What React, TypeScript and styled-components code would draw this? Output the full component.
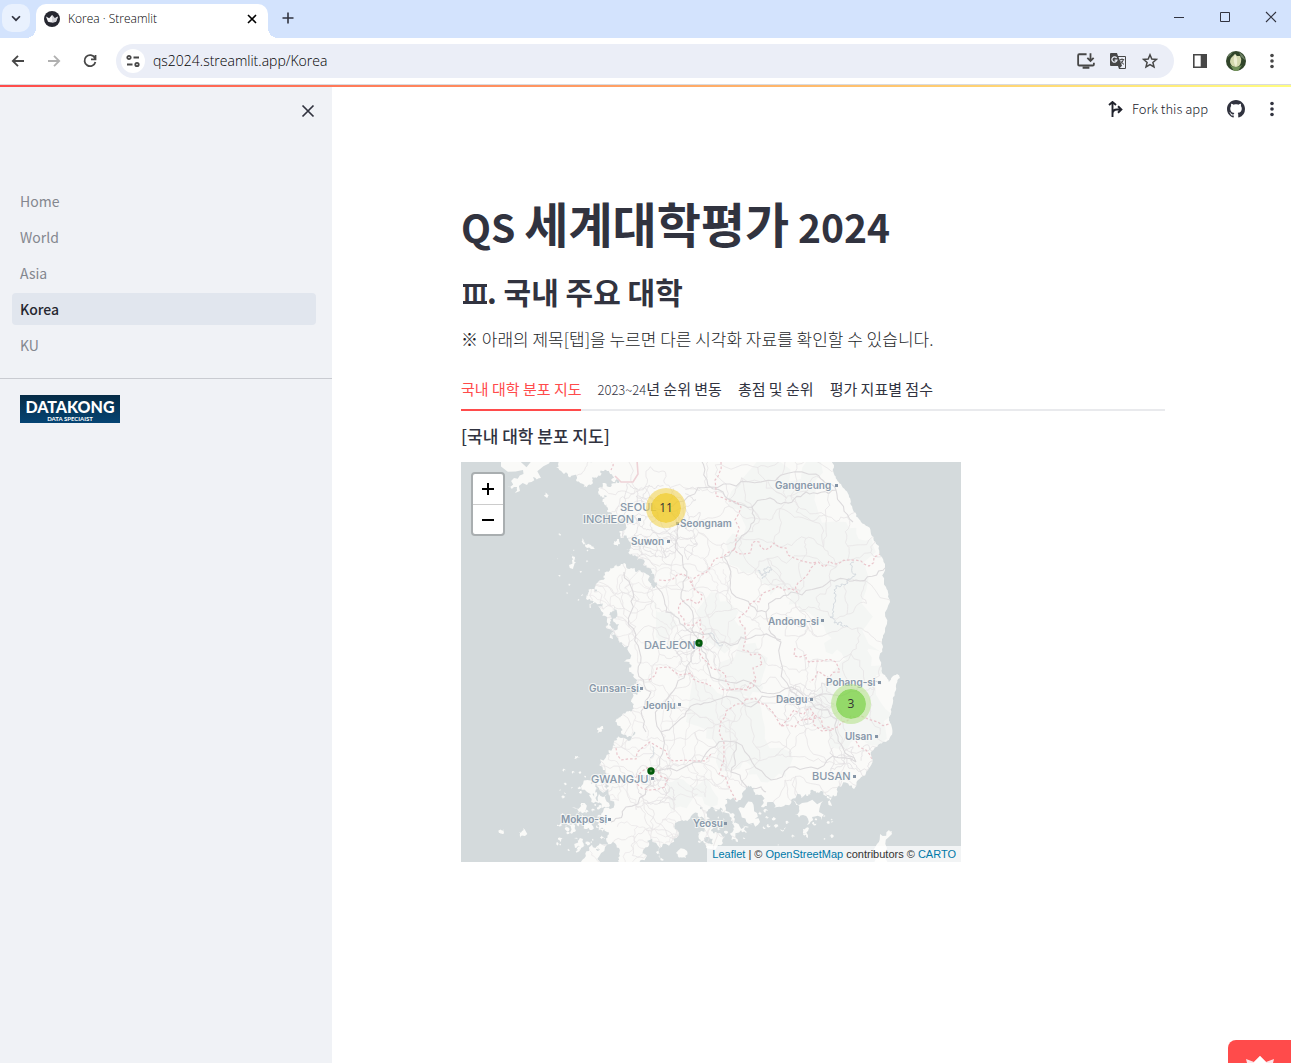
import React, { useState } from "react";
import styled, { createGlobalStyle } from "styled-components";

const sans = `"Noto Sans CJK KR", "Noto Sans", sans-serif`;
const chromeSans = `"Open Sans", "Noto Sans CJK KR", sans-serif`;

const GlobalStyle = createGlobalStyle`
  *, *::before, *::after { box-sizing: border-box; }
  body { margin: 0; background: #fff; color: #31333f; font-family: ${sans}; }
  button, input { font: inherit; color: inherit; }
  button { display: inline-flex; align-items: center; justify-content: center; padding: 0; border: 0; background: none; cursor: pointer; }
  svg { display: block; flex: none; }
  h1, h2, p { margin: 0; }
`;

const Window = styled.div`
  display: flex;
  flex-direction: column;
  min-height: 100vh;
  overflow: hidden;
`;

/* Browser frame */
const TabStrip = styled.header`
  display: flex;
  align-items: flex-start;
  height: 38px;
  background: #d3e3fd;
`;
const TabSearch = styled.button`
  width: 28px;
  height: 28px;
  margin: 4px 8px 0 2px;
  border-radius: 10px;
  background: #e9f1fe;
`;
const BrowserTab = styled.div`
  position: relative;
  display: flex;
  align-items: center;
  width: 232px;
  height: 34px;
  margin: 4px 6px 0 -2px;
  padding: 0 8px 4px;
  gap: 8px;
  border-radius: 10px 10px 0 0;
  background: #fff;
  font: 300 12px/18px ${chromeSans};
  color: #000;
  &::before, &::after {
    content: "";
    position: absolute;
    bottom: 0;
    width: 10px;
    height: 10px;
  }
  &::before { right: 100%; background: radial-gradient(circle at 0 0, transparent 10px, #fff 10px); }
  &::after { left: 100%; background: radial-gradient(circle at 100% 0, transparent 10px, #fff 10px); }
`;
const TabTitle = styled.span`flex: 1;`;
const SmallButton = styled.button`
  width: 16px;
  height: 16px;
`;
const NewTab = styled.button`
  width: 28px;
  height: 28px;
  margin-top: 4px;
`;
const WindowControls = styled.div`
  display: flex;
  margin: 0 -3px 0 auto;
`;
const WindowButton = styled.button`
  width: 46px;
  height: 34px;
`;
const Toolbar = styled.div`
  display: flex;
  align-items: center;
  height: 47px;
  padding-right: 1px;
  border-bottom: 1px solid #d9dbe0;
  background: #fff;
  color: #474747;
`;
const ToolButton = styled.button<{ $dim?: boolean }>`
  width: 36px;
  height: 36px;
  color: ${(p) => (p.$dim ? "#b0b0b0" : "#474747")};
`;
const AddressBar = styled.div`
  display: flex;
  flex: 1;
  align-items: center;
  height: 34px;
  margin: 0 8px;
  padding: 0 8px 0 5px;
  border-radius: 17px;
  background: #ebeef7;
`;
const SiteInfo = styled.button`
  width: 24px;
  height: 24px;
  margin-right: 8px;
  border-radius: 50%;
  background: #fff;
`;
const Address = styled.input`
  flex: 1;
  min-width: 0;
  padding: 0;
  border: 0;
  outline: 0;
  background: none;
  font: 300 14px/20px ${chromeSans};
  color: #000;
`;
const AddressAction = styled.button`
  width: 32px;
  height: 32px;
`;

/* Application */
const Rainbow = styled.div`
  height: 2px;
  background: linear-gradient(90deg, #ff4b4b, #fffd80);
`;
const AppBody = styled.div`
  display: flex;
  flex: 1;
`;
const Sidebar = styled.aside`
  flex: none;
  width: 332px;
  background: #f0f2f6;
`;
const SidebarTop = styled.div`
  display: flex;
  justify-content: flex-end;
  height: 98px;
  padding: 16px 16px 0;
`;
const Nav = styled.nav`
  padding: 0 16px 17px 12px;
  border-bottom: 1px solid #c9cbd1;
`;
const NavList = styled.ul`
  display: flex;
  flex-direction: column;
  gap: 4px;
  margin: 0;
  padding: 0;
  list-style: none;
`;
const NavLink = styled.a<{ $active?: boolean }>`
  display: block;
  height: 32px;
  padding: 0 8px;
  border-radius: 4px;
  background: ${(p) => (p.$active ? "#e1e6ee" : "transparent")};
  color: ${(p) => (p.$active ? "#262730" : "#84878f")};
  font-size: 14px;
  font-weight: ${(p) => (p.$active ? 500 : 400)};
  line-height: 32px;
  text-decoration: none;
`;
const Brand = styled.div`
  display: flex;
  flex-direction: column;
  align-items: center;
  width: 100px;
  height: 28px;
  margin: 16px 20px;
  padding-top: 4px;
  background: linear-gradient(#062c46, #054473);
  color: #fff;
`;
const BrandName = styled.span`
  font: 900 16px/15px Lato, sans-serif;
`;
const BrandTag = styled.span`
  font: 700 6px/9px Lato, sans-serif;
`;
const Main = styled.main`
  flex: 1;
  min-width: 0;
  padding-left: 3px;
`;
const AppToolbar = styled.div`
  display: flex;
  align-items: center;
  justify-content: flex-end;
  height: 44px;
  padding-right: 9px;
  gap: 16px;
`;
const ForkButton = styled.button`
  gap: 8px;
  padding-right: 2px;
  font-size: 13px;
  font-weight: 300;
  line-height: 20px;
  color: #20222c;
`;
const IconButton = styled.button`
  width: 20px;
  height: 20px;
`;
const Content = styled.div`
  max-width: 736px;
  margin: 0 auto;
  padding: 63px 16px 40px;
`;
const Title = styled.h1`
  height: 71px;
  font-size: 48px;
  font-weight: 700;
  line-height: 56px;
  white-space: nowrap;
`;
const Latin = styled.span`font-size: 39px;`;
const Subtitle = styled.h2`
  font-size: 30px;
  font-weight: 700;
  line-height: 52px;
`;
const Numeral = styled.span`
  display: inline-block;
  width: 24px;
  height: 20px;
  margin-left: 2px;
  border: solid #31333f;
  border-width: 3px 0;
  font-size: 24px;
  line-height: 14px;
  text-align: center;
`;
const Note = styled.p`
  padding: 9px 0 8px;
  font-size: 17px;
  line-height: 26px;
  font-weight: 300;
  color: #1c1e28;
`;
const TabList = styled.div`
  display: flex;
  gap: 16px;
  height: 44px;
  margin-top: 7px;
  border-bottom: 2px solid #e9eaed;
`;
const TabButton = styled.button<{ $active?: boolean }>`
  height: 44px;
  border-bottom: 2px solid ${(p) => (p.$active ? "#ff4b4b" : "transparent")};
  color: ${(p) => (p.$active ? "#ff4b4b" : "#31333f")};
  font-size: 15px;
  font-weight: 400;
  white-space: nowrap;
`;
const Years = styled.span`
  font-size: 13px;
  font-weight: 300;
`;
const PanelTitle = styled.p`
  padding: 12px 0 13px;
  font-size: 17px;
  font-weight: 500;
  line-height: 26px;
`;

/* Map */
const MapFrame = styled.div`
  position: relative;
  width: 100%;
  max-width: 500px;
  height: 400px;
  overflow: hidden;
  background: #d4dadc;
`;
const ZoomBox = styled.div`
  position: absolute;
  top: 10px;
  left: 10px;
  display: flex;
  flex-direction: column;
  border: 2px solid #a9aeb0;
  border-radius: 4px;
  background: #fff;
`;
const ZoomButton = styled.button`
  width: 30px;
  height: 30px;
  color: #000;
  & + & { border-top: 1px solid #ccc; }
`;
const Cluster = styled.button<{ $tone: "yellow" | "green" }>`
  position: absolute;
  width: 40px;
  height: 40px;
  border: 5px solid ${(p) => (p.$tone === "yellow" ? "rgba(241,211,87,.6)" : "rgba(181,226,140,.6)")};
  border-radius: 50%;
  background: ${(p) => (p.$tone === "yellow" ? "rgba(240,203,46,.85)" : "rgba(130,212,80,.85)")};
  background-clip: padding-box;
  font: 12px/30px "Open Sans", sans-serif;
  color: #333;
`;
const Attribution = styled.div`
  position: absolute;
  right: 0;
  bottom: 0;
  padding: 0 5px;
  background: rgba(255, 255, 255, 0.7);
  color: #333;
  font: 11px/16px "Liberation Sans", Arial, sans-serif;
  white-space: nowrap;
  a { color: #0078a8; text-decoration: none; }
`;
const HostBadge = styled.a`
  position: fixed;
  right: 0;
  bottom: 0;
  display: flex;
  justify-content: center;
  width: 63px;
  height: 23px;
  padding-top: 15px;
  border-radius: 8px 0 0 0;
  background: #ff4b4b;
  overflow: hidden;
`;

type Point = [number, number];

const pts = (s: string): Point[] => s.split(" ").map((p) => p.split(",").map(Number) as Point);

const makeRandom = (seed: number) => () => {
  seed = (seed * 16807) % 2147483647;
  return seed / 2147483647;
};

// Splits every edge of a line and shifts the midpoints, which gives a natural coast or road.
function roughen(line: Point[], amount: number, steps: number, rand: () => number): Point[] {
  let out = line;
  for (let s = 0; s < steps; s++) {
    const next: Point[] = [];
    for (let i = 0; i < out.length - 1; i++) {
      const [x1, y1] = out[i];
      const [x2, y2] = out[i + 1];
      const k = (rand() - 0.5) * amount;
      next.push(out[i], [(x1 + x2) / 2 - (y2 - y1) * k, (y1 + y2) / 2 + (x2 - x1) * k]);
    }
    next.push(out[out.length - 1]);
    out = next;
  }
  return out;
}

const toPath = (line: Point[], close = false) =>
  "M" + line.map(([x, y]) => `${x.toFixed(1)},${y.toFixed(1)}`).join("L") + (close ? "Z" : "");

const random = makeRandom(4711);

const westAndSouth =
  "95,-4 97,2 103,12 116,15 122,22 130,23 132,15 140,13 146,9 150,18 158,21 148,25 137,27 139,33 146,34 143,42 149,50 160,57 165,64 158,70 166,76 173,80 165,88 175,94 182,103 190,112 195,121 192,126 187,118 180,110 170,106 160,102 152,106 145,110 142,118 136,121 128,130 125,136 133,139 130,146 138,142 142,141 146,155 145,166 152,177 153,170 149,160 149,150 154,145 156,150 158,162 156,175 161,182 163,200 168,208 173,213 176,222 180,230 170,240 173,246 165,250 160,254 156,262 160,269 173,270 173,273 160,276 153,280 149,292 142,308 145,312 137,316 130,322 138,326 148,324 149,335 142,350 138,360 146,370 147,381 138,383 128,389 122,404 138,404 150,382 158,392 162,404 180,404 184,392 186,379 195,390 203,398 205,382 216,368 221,358 232,352 243,361 238,377 245,386 262,381 258,371 250,368 246,352 252,345 261,353 271,362 277,378 272,362 268,350 258,338 275,340 282,330 290,324 298,333 300,345 310,340 320,345 330,338 345,332 350,328 358,331 372,333 380,325 393,327";
const east =
  "393,327 397,318 408,306 412,298 410,290 418,282 428,278 430,262 428,255 432,240 435,228 439,216 436,212 428,220 424,213 420,203 422,185 424,170 429,140 425,125 424,102 418,84 410,72 400,60 392,48 388,35 380,22 373,12 368,-4 95,-4";
const mainland = toPath([...roughen(pts(westAndSouth), 0.95, 3, random), ...roughen(pts(east), 0.35, 3, random)], true);

const islandOutlines = [
  "40,-4 62,8 53,16 46,24 56,25 54,31 66,23 72,15 80,16 91,-4 40,-4",
  "121,76 124,82 130,83 134,87 126,86 121,80 121,76",
  "153,79 158,77 159,82 154,83 153,79",
  "110,92 114,95 112,99 110,92",
  "111,98 115,100 112,107 111,98",
  "84,30 88,33 86,36 84,30",
  "136,268 142,264 141,269 137,271 136,268",
  "114,294 119,295 116,298 114,294",
  "122,322 132,320 142,325 135,333 126,330 122,322",
  "128,333 136,330 139,340 133,341 128,333",
  "138,332 146,332 148,341 141,346 138,332",
  "111,345 120,341 124,350 115,352 111,345",
  "104,360 112,362 115,368 109,371 104,360",
  "120,352 129,354 126,360 119,359 120,352",
  "123,362 130,361 131,368 124,367 123,362",
  "113,376 122,377 120,386 114,386 113,376",
  "97,376 103,377 100,380 97,376",
  "58,370 62,366 64,374 59,376 58,370",
  "38,371 43,367 41,372 38,371",
  "215,391 226,389 225,396 218,398 215,391",
  "245,375 254,374 252,382 246,381 245,375",
  "279,345 291,340 296,351 299,360 288,362 280,352 279,345",
  "270,371 276,372 277,380 271,379 270,371",
  "282,363 288,365 284,373 280,368 282,363",
  "332,338 341,341 362,339 358,350 361,358 351,355 346,363 342,353 334,353 338,347 332,338",
  "318,366 325,365 323,369 318,366",
  "342,367 348,366 347,376 342,371 342,367",
  "367,333 371,335 371,344 366,336 367,333",
  "416,382 419,372 428,368 431,372 426,386 427,404 410,404 416,382",
];
const islands = islandOutlines.map((o) => toPath(roughen(pts(o), 0.9, 2, random), true)).join("");

// Tiny islets scattered along the west and south coasts.
const islets = Array.from({ length: 110 }, (_, i) => {
  const south = i % 3 === 0;
  const north = i % 9 === 1;
  const x = south ? 235 + random() * 140 : 96 + random() * 50;
  const y = south ? 345 + random() * 40 : north ? 70 + random() * 70 : 305 + random() * 85;
  const r = 0.5 + random() * (north ? 0.6 : 1.6);
  return toPath(roughen([[x, y - r], [x + r * 1.4, y], [x, y + r], [x - r, y], [x, y - r]], 0.9, 1, random), true);
}).join("");

// A jittered lattice of junctions joined by winding roads.
function roadNet(x0: number, y0: number, x1: number, y1: number, cell: number, keep: number) {
  const cols = Math.ceil((x1 - x0) / cell) + 1;
  const rows = Math.ceil((y1 - y0) / cell) + 1;
  const node: Point[][] = Array.from({ length: rows }, (_, r) =>
    Array.from({ length: cols }, (_, c) => [
      x0 + (c + (random() - 0.5) * 0.9) * cell,
      y0 + (r + (random() - 0.5) * 0.9) * cell,
    ])
  );
  let d = "";
  const join = (a: Point, b?: Point) => {
    if (b && random() < keep) d += toPath(roughen([a, b], 0.5, 3, random));
  };
  node.forEach((row, r) =>
    row.forEach((n, c) => {
      join(n, row[c + 1]);
      join(n, node[r + 1]?.[c]);
      if (random() < 0.35) join(n, node[r + 1]?.[c + 1]);
    })
  );
  return d;
}
const roads = roadNet(90, 0, 440, 400, 25, 0.75);
const westRoads = roadNet(130, 100, 260, 390, 20, 0.6);
const cityRoads = [
  roadNet(165, 25, 235, 95, 10, 0.75),
  roadNet(220, 170, 250, 200, 11, 0.6),
  roadNet(325, 225, 365, 255, 11, 0.6),
  roadNet(370, 285, 410, 315, 10, 0.7),
  roadNet(180, 305, 210, 330, 11, 0.6),
].join("");
const highways = [
  "205,45 215,80 222,120 232,160 240,185 250,215 300,230 345,238 385,232 420,222",
  "240,185 215,225 200,270 190,310 165,345 150,360",
  "345,238 375,270 395,300",
  "190,310 240,300 275,280 310,318 350,305 395,300",
  "240,-2 262,30 291,45 288,68 263,95 275,135 305,150 320,180 345,238",
  "205,45 250,25 300,20 355,12 375,28 392,60",
  "291,45 320,42 345,30 375,28",
  "195,120 205,150 235,170 280,175 320,178",
  "163,110 170,150 180,195 190,230 185,270",
  "305,150 330,130 370,118 395,118 425,105",
  "200,270 225,250 250,240 290,245 345,238",
  "275,280 270,310 300,325 305,330",
]
  .map((h) => toPath(roughen(pts(h), 0.45, 3, random)))
  .join("");

const borders = [
  "150,-2 150,8",
  "260,0 258,12 254,18 255,34 268,39 280,45 274,58 275,75 273,88 283,92 289,91 291,81 298,80 304,88 313,81 325,86 333,96 350,101 363,105 368,99 377,102 389,98 400,99 408,104 413,95 419,92",
  "355,101 347,112 337,121 336,130 323,128 318,124 302,131 299,140 288,143 285,150 278,156 284,166 285,177 282,188 290,193 300,193 301,202",
  "273,88 262,95 250,104 238,113 230,121 241,133 236,142 220,140 218,152 224,163 239,158 243,173 238,190 247,201",
  "198,118 212,117 222,112 230,121",
  "301,202 292,206 295,217 285,228 269,228 258,226",
  "247,201 258,208 265,220 269,228 286,228 295,218",
  "334,186 333,194 345,193 348,200 361,199 375,200 379,210 368,216 357,209 349,220",
  "188,218 196,206 208,205 218,213 230,211 238,220 250,224",
  "155,286 160,298 175,297 181,286 189,280 205,289 212,299 235,299 250,292",
  "175,315 180,310 196,308 207,317 204,325 188,328 176,322 175,315",
  "343,258 352,252 362,267 372,267 381,260 390,254 400,254 417,260 428,262",
  "285,237 294,236 305,243 311,249 320,264 334,265 343,257 355,256",
  "285,237 275,242 265,249 260,259 263,281 263,293 260,305 258,312 267,322 275,338",
  "395,279 405,288 411,297",
  "320,264 333,248 343,252 349,246 352,262 372,268",
]
  .map((b) => toPath(roughen(pts(b), 0.5, 1, random)))
  .join("");

const reserves = [
  "300,-5 360,0 385,60 415,90 420,190 400,205 365,190 340,150 300,120 265,80 270,30",
  "250,130 285,165 300,220 270,230 235,150",
  "195,140 212,150 205,185 195,170",
  "232,215 285,235 330,290 300,320 255,300 225,260",
  "380,200 425,210 425,270 390,280 350,265 345,245",
  "205,320 245,310 250,345 210,350",
]
  .map((r) => toPath(roughen(pts(r), 0.8, 3, random), true))
  .join("");

const rivers = [
  "393,100 395,112 387,121 379,125 375,134 373,150 369,155 380,160 387,165",
  "297,108 301,114 305,107 311,108 301,117",
  "247,172 255,178 262,183",
  "191,285 192,292 189,296",
]
  .map((r) => toPath(roughen(pts(r), 0.9, 3, random)))
  .join("");

type City = { name: string; x: number; y: number; dot?: Point; big?: boolean };
const cities: City[] = [
  { name: "SEOUL", x: 159, y: 49, big: true },
  { name: "INCHEON", x: 122, y: 61, dot: [177, 56], big: true },
  { name: "Seongnam", x: 219, y: 65, dot: [215, 60] },
  { name: "Suwon", x: 170, y: 83, dot: [206, 78] },
  { name: "Gangneung", x: 314, y: 27, dot: [374, 22] },
  { name: "Andong-si", x: 307, y: 163, dot: [360, 157] },
  { name: "DAEJEON", x: 183, y: 187, dot: [238, 182], big: true },
  { name: "Gunsan-si", x: 128, y: 230, dot: [179, 225] },
  { name: "Jeonju", x: 182, y: 247, dot: [217, 241] },
  { name: "Pohang-si", x: 365, y: 224, dot: [417, 219] },
  { name: "Daegu", x: 315, y: 241, dot: [349, 236] },
  { name: "Ulsan", x: 384, y: 278, dot: [414, 273] },
  { name: "BUSAN", x: 351, y: 318, dot: [392, 313], big: true },
  { name: "GWANGJU", x: 130, y: 321, dot: [190, 315], big: true },
  { name: "Mokpo-si", x: 100, y: 361, dot: [147, 356] },
  { name: "Yeosu", x: 232, y: 365, dot: [263, 360] },
];

const CityName = styled.text<{ $big?: boolean }>`
  font: ${(p) => (p.$big ? "500 11px" : "600 10px")} Inter, sans-serif;
  fill: #8898aa;
  stroke: rgba(250, 250, 248, 0.8);
  stroke-width: 2px;
  paint-order: stroke;
`;

function BaseMap() {
  return (
    <svg width="500" height="400" viewBox="0 0 500 400" aria-label="Map of South Korea">
      <defs>
        <clipPath id="land">
          <path d={mainland} />
        </clipPath>
      </defs>
      <path d={mainland + islands + islets} fill="#fafaf8" />
      <g clipPath="url(#land)" fill="none">
        <path d={reserves} fill="#f4f6f4" />
        <path d={roads} stroke="#e7e5e6" strokeWidth="0.8" />
        <path d={westRoads} stroke="#e9e7e8" strokeWidth="0.7" />
        <path d={cityRoads} stroke="#e2e0e2" strokeWidth="0.8" />
        <path d={highways} stroke="#dcdadc" strokeWidth="1.1" />
        <path d={rivers} stroke="#d4dadf" strokeWidth="1" />
        <path d={borders} stroke="#eac6cc" strokeWidth="1.2" strokeDasharray="2.5 2" />
        <path d="M176,-2L177,12L172,20L160,20L154,14" stroke="#eed2d6" strokeWidth="1.6" />
      </g>
      {cities.map((c) => (
        <g key={c.name}>
          {c.dot && <rect x={c.dot[0]} y={c.dot[1]} width="3" height="3" fill="#8494a6" />}
          <CityName x={c.x} y={c.y} $big={c.big}>
            {c.name}
          </CityName>
        </g>
      ))}
      <circle cx="238" cy="181" r="2.5" fill="#3f7f3f" stroke="#005a0a" strokeWidth="2.4" />
      <circle cx="190" cy="309" r="2.5" fill="#3f7f3f" stroke="#005a0a" strokeWidth="2.4" />
    </svg>
  );
}

function Stroke({ d, size = 16, width = 2, children }: { d: string; size?: number; width?: number; children?: React.ReactNode }) {
  return (
    <svg width={size} height={size} viewBox="0 0 16 16" fill="none" stroke="currentColor" strokeWidth={width} aria-hidden="true">
      <path d={d} />
      {children}
    </svg>
  );
}

function Dots() {
  return (
    <svg width="16" height="16" viewBox="0 0 16 16" fill="currentColor" aria-hidden="true">
      <circle cx="8" cy="2.5" r="1.8" />
      <circle cx="8" cy="8" r="1.8" />
      <circle cx="8" cy="13.5" r="1.8" />
    </svg>
  );
}

function Favicon() {
  return (
    <svg width="16" height="16" viewBox="0 0 16 16" aria-hidden="true">
      <circle cx="8" cy="8" r="8" fill="#262730" />
      <path d="M2 5.5L5.2 7.2L8 4L10.8 7.2L14 5.5L12 10.8Q8 12 4 10.8Z" fill="#f4f4f6" />
      <path d="M8 4L10.8 7.2L14 5.5L12 10.8Q10 11.4 8 11.4Z" fill="#d5d5da" />
    </svg>
  );
}

function Avatar() {
  return (
    <svg width="20" height="20" viewBox="0 0 20 20" aria-hidden="true">
      <circle cx="10" cy="10" r="10" fill="#31452a" />
      <path d="M1 7Q5 4 7 1Q3 2 1 7M13 1Q18 4 19 9L15 6Z" fill="#6d8064" />
      <path d="M9 3L11 5L14 5Q16 8 15 11Q14 16 10 16Q5 16 4 11Q4 7 7 5Z" fill="#d3d8ae" />
      <path d="M9 3Q13 9 10 16Q6 11 9 3Z" fill="#eeeed4" />
      <path d="M4 14Q10 18 16 14L12 20H8Z" fill="#71905a" />
    </svg>
  );
}

function Translate() {
  return (
    <svg width="18" height="18" viewBox="0 0 18 18" aria-hidden="true">
      <path d="M2 1H8L9 4H16Q17 4 17 5V16Q17 17 16 17H10L9 14H2Q1 14 1 13V2Q1 1 2 1Z" fill="#474747" />
      <path d="M9.5 5H16V16H10.8L13 13.8Z" fill="#ebeef7" />
      <path d="M7.6 6A2.6 2.6 0 1 0 8 8.2H5.6" fill="none" stroke="#ebeef7" strokeWidth="1.3" />
      <path d="M10.8 7.6H15.2M13 6.4V7.6M14.4 7.6Q13.6 10.6 11.4 12M11.6 8.8Q12.8 11.2 15 12.4" fill="none" stroke="#474747" />
    </svg>
  );
}

function GitHub() {
  return (
    <svg width="18" height="18" viewBox="0 0 16 16" fill="currentColor" aria-hidden="true">
      <path d="M8 0C3.58 0 0 3.58 0 8c0 3.54 2.29 6.53 5.47 7.59.4.07.55-.17.55-.38 0-.19-.01-.82-.01-1.49-2.01.37-2.53-.49-2.69-.94-.09-.23-.48-.94-.82-1.13-.28-.15-.68-.52-.01-.53.63-.01 1.08.58 1.23.82.72 1.21 1.87.87 2.33.66.07-.52.28-.87.51-1.07-1.78-.2-3.64-.89-3.64-3.95 0-.87.31-1.59.82-2.15-.08-.2-.36-1.02.08-2.12 0 0 .67-.21 2.2.82.64-.18 1.32-.27 2-.27s1.36.09 2 .27c1.53-1.04 2.2-.82 2.2-.82.44 1.1.16 1.92.08 2.12.51.56.82 1.27.82 2.15 0 3.07-1.87 3.75-3.65 3.95.29.25.54.73.54 1.48 0 1.07-.01 1.93-.01 2.2 0 .21.15.46.55.38A8.01 8.01 0 0 0 16 8c0-4.42-3.58-8-8-8Z" />
    </svg>
  );
}

const pages = ["Home", "World", "Asia", "Korea", "KU"];
const tabs: { years?: string; label: string }[] = [
  { label: "국내 대학 분포 지도" },
  { years: "2023~24", label: "년 순위 변동" },
  { label: "총점 및 순위" },
  { label: "평가 지표별 점수" },
];

export default function App() {
  const [active, setActive] = useState(0);
  return (
    <Window>
      <GlobalStyle />
      <TabStrip>
        <TabSearch aria-label="Search tabs">
          <Stroke d="M3.5 6L8 10.5L12.5 6" size={14} />
        </TabSearch>
        <BrowserTab>
          <Favicon />
          <TabTitle>Korea · Streamlit</TabTitle>
          <SmallButton aria-label="Close tab">
            <Stroke d="M4 4L12 12M12 4L4 12" width={1.6} />
          </SmallButton>
        </BrowserTab>
        <NewTab aria-label="New tab">
          <Stroke d="M8 2.5V13.5M2.5 8H13.5" width={1.6} />
        </NewTab>
        <WindowControls>
          <WindowButton aria-label="Minimize">
            <Stroke d="M3 8.5H13" width={1} />
          </WindowButton>
          <WindowButton aria-label="Maximize">
            <Stroke d="M3.5 3.5H12.5V12.5H3.5Z" width={1} />
          </WindowButton>
          <WindowButton aria-label="Close">
            <Stroke d="M3 3L13 13M13 3L3 13" width={1.1} />
          </WindowButton>
        </WindowControls>
      </TabStrip>
      <Toolbar>
        <ToolButton aria-label="Back">
          <Stroke d="M14 8H3M8 2.8L2.8 8L8 13.2" width={1.8} />
        </ToolButton>
        <ToolButton aria-label="Forward" $dim>
          <Stroke d="M2 8H13M8 2.8L13.2 8L8 13.2" width={1.8} />
        </ToolButton>
        <ToolButton aria-label="Reload">
          <Stroke d="M12.9 5A5.5 5.5 0 1 0 13.4 9M13.5 2V6.4H9" width={1.8} />
        </ToolButton>
        <AddressBar>
          <SiteInfo aria-label="Site information">
            <Stroke d="M8.5 4.5H14M2 11.5H7.5" width={1.8}>
              <circle cx="4" cy="4.5" r="1.7" />
              <circle cx="12" cy="11.5" r="1.7" />
            </Stroke>
          </SiteInfo>
          <Address aria-label="Address" defaultValue="qs2024.streamlit.app/Korea" />
          <AddressAction aria-label="Install app">
            <Stroke d="M8.5 2H2Q1 2 1 3V11Q1 12 2 12H14Q15 12 15 11V9.5M5 14H11M12 1V8M9.2 5.2L12 8L14.8 5.2" size={18} width={1.6} />
          </AddressAction>
          <AddressAction aria-label="Translate">
            <Translate />
          </AddressAction>
          <AddressAction aria-label="Bookmark">
            <Stroke d="M8 1.8L9.8 6L14.4 6.4L10.9 9.4L12 13.9L8 11.5L4 13.9L5.1 9.4L1.6 6.4L6.2 6Z" width={1.5} />
          </AddressAction>
        </AddressBar>
        <ToolButton aria-label="Side panel">
          <Stroke d="M1.8 1.8H14.2V14.2H1.8Z" width={1.6}>
            <path d="M9.5 2H14V14H9.5Z" fill="currentColor" />
          </Stroke>
        </ToolButton>
        <ToolButton aria-label="Profile">
          <Avatar />
        </ToolButton>
        <ToolButton aria-label="Browser menu">
          <Dots />
        </ToolButton>
      </Toolbar>
      <Rainbow />
      <AppBody>
        <Sidebar>
          <SidebarTop>
            <SmallButton aria-label="Close sidebar">
              <Stroke d="M2.5 2.5L13.5 13.5M13.5 2.5L2.5 13.5" width={1.7} />
            </SmallButton>
          </SidebarTop>
          <Nav>
            <NavList>
              {pages.map((p) => (
                <li key={p}>
                  <NavLink href={`#${p}`} $active={p === "Korea"}>
                    {p}
                  </NavLink>
                </li>
              ))}
            </NavList>
          </Nav>
          <Brand>
            <BrandName>DATAKONG</BrandName>
            <BrandTag>DATA SPECIAIST</BrandTag>
          </Brand>
        </Sidebar>
        <Main>
          <AppToolbar>
            <ForkButton>
              <Stroke d="M4.5 16V1M1 4L4.5 1L8 4M4.5 13Q4.5 8.5 9 8.5H13M10 5.2L13.4 8.5L10 11.8" width={1.9} />
              Fork this app
            </ForkButton>
            <IconButton aria-label="View source on GitHub">
              <GitHub />
            </IconButton>
            <IconButton aria-label="App menu">
              <Dots />
            </IconButton>
          </AppToolbar>
          <Content>
            <Title>
              <Latin>QS </Latin>세계대학평가<Latin> 2024</Latin>
            </Title>
            <Subtitle>
              <Numeral>Ⅲ</Numeral>. 국내 주요 대학
            </Subtitle>
            <Note>※ 아래의 제목[탭]을 누르면 다른 시각화 자료를 확인할 수 있습니다.</Note>
            <TabList role="tablist">
              {tabs.map((t, i) => (
                <TabButton key={t.label} role="tab" aria-selected={i === active} $active={i === active} onClick={() => setActive(i)}>
                  <span>
                    {t.years && <Years>{t.years}</Years>}
                    {t.label}
                  </span>
                </TabButton>
              ))}
            </TabList>
            <PanelTitle>[국내 대학 분포 지도]</PanelTitle>
            <MapFrame>
              <BaseMap />
              <Cluster $tone="yellow" style={{ left: 185, top: 26 }}>
                11
              </Cluster>
              <Cluster $tone="green" style={{ left: 370, top: 222 }}>
                3
              </Cluster>
              <ZoomBox>
                <ZoomButton aria-label="Zoom in">
                  <Stroke d="M8 2V14M2 8H14" width={2} />
                </ZoomButton>
                <ZoomButton aria-label="Zoom out">
                  <Stroke d="M2 8H14" width={2} />
                </ZoomButton>
              </ZoomBox>
              <Attribution>
                <a href="#leaflet">Leaflet</a> | © <a href="#osm">OpenStreetMap</a> contributors © <a href="#carto">CARTO</a>
              </Attribution>
            </MapFrame>
          </Content>
        </Main>
      </AppBody>
      <HostBadge href="#streamlit" aria-label="Hosted with Streamlit">
        <svg width="30" height="24" viewBox="0 0 30 24" aria-hidden="true">
          <path d="M1 4L9 7L15 1L21 7L29 4L25 20H5Z" fill="#fde6ea" />
          <path d="M9 7L15 1L21 7L18 20H12Z" fill="#fff" />
        </svg>
      </HostBadge>
    </Window>
  );
}
